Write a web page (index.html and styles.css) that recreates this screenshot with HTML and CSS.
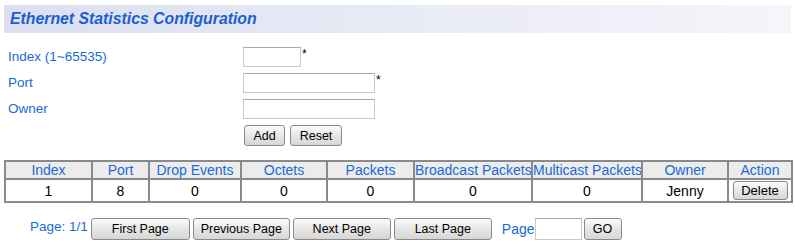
FILE: index.html
```html
<!DOCTYPE html>
<html lang="en">
<head>
    <meta charset="UTF-8">
    <title>Ethernet Statistics Configuration</title>
    <link rel="stylesheet" href="styles.css">
</head>
<body>
    <div class="title-bar">Ethernet Statistics Configuration</div>

    <form class="config-form">
        <div class="form-row">
            <label class="form-label">Index (1~65535)</label>
            <input type="text" class="input-short"><span class="req">*</span>
        </div>
        <div class="form-row">
            <label class="form-label">Port</label>
            <input type="text" class="input-long"><span class="req">*</span>
        </div>
        <div class="form-row">
            <label class="form-label">Owner</label>
            <input type="text" class="input-long">
        </div>
        <div class="form-row">
            <span class="form-label"></span>
            <button type="button" class="btn btn-add">Add</button>
            <button type="button" class="btn btn-reset">Reset</button>
        </div>
    </form>

    <table class="stats-table">
        <tr>
            <th class="c-index">Index</th>
            <th class="c-port">Port</th>
            <th class="c-drop">Drop Events</th>
            <th class="c-oct">Octets</th>
            <th class="c-pkt">Packets</th>
            <th class="c-bc">Broadcast Packets</th>
            <th class="c-mc">Multicast Packets</th>
            <th class="c-owner">Owner</th>
            <th class="c-action">Action</th>
        </tr>
        <tr>
            <td>1</td>
            <td>8</td>
            <td>0</td>
            <td>0</td>
            <td>0</td>
            <td>0</td>
            <td>0</td>
            <td>Jenny</td>
            <td><button type="button" class="btn btn-delete">Delete</button></td>
        </tr>
    </table>

    <div class="pager">
        <span class="pager-text">Page: 1/1</span>
        <button type="button" class="btn btn-page btn-first">First Page</button>
        <button type="button" class="btn btn-page btn-prev">Previous Page</button>
        <button type="button" class="btn btn-page">Next Page</button>
        <button type="button" class="btn btn-page">Last Page</button>
        <span class="pager-text pager-goto">Page</span><input type="text" class="input-page"><button type="button" class="btn btn-go">GO</button>
    </div>
</body>
</html>
```

FILE: styles.css
```css
body {
    margin: 0;
    padding: 5px 4px 0 4px;
    font-family: "Liberation Sans", Arial, sans-serif;
    font-size: 13px;
    color: #000;
    background: #fff;
}
.title-bar {
    height: 28px;
    line-height: 28px;
    padding-left: 6px;
    font-size: 15.8px;
    font-weight: bold;
    font-style: italic;
    color: #1a5fd2;
    background: linear-gradient(to right, #dcdff0, #e8eaf5 50%, #f5f5fa);
    width: 781px;
}
.config-form {
    margin: 14px 0 0 0;
}
.form-row {
    display: flex;
    align-items: flex-start;
    height: 26px;
}
.form-label {
    width: 235px;
    padding-left: 4px;
    color: #1a6ad8;
    font-size: 13.5px;
    line-height: 20px;
    flex-shrink: 0;
}
input[type="text"] {
    height: 20px;
    box-sizing: border-box;
    border: 1px solid #c8c8c8;
    border-top-color: #a8a8a8;
    margin: 0;
    padding: 0 2px;
    font-family: inherit;
    font-size: 13px;
}
.input-short {
    width: 58px;
}
.input-long {
    width: 132px;
}
.req {
    font-size: 12px;
    line-height: 14px;
    margin-left: 1px;
}
.btn {
    font-family: "Liberation Sans", Arial, sans-serif;
    font-size: 12.5px;
    color: #000;
    background: linear-gradient(to bottom, #fcfcfc, #e6e6e6 50%, #d6d6d6);
    border: 1px solid #8a8a8a;
    border-radius: 3px;
    height: 21px;
    padding: 0;
    margin: 0;
    box-sizing: border-box;
    cursor: pointer;
}
.btn-add {
    width: 41px;
    margin-left: 1px;
}
.btn-reset {
    width: 52px;
    margin-left: 5px;
}
.stats-table {
    margin-top: 9px;
    width: 787px;
    border-collapse: collapse;
    border: 2px solid #8a8a8a;
    table-layout: fixed;
}
.stats-table th,
.stats-table td {
    border: 2px solid #8a8a8a;
    text-align: center;
    padding: 0;
    white-space: nowrap;
    overflow: hidden;
    font-size: 14px;
}
.stats-table th {
    background: #ececec;
    color: #1a6ad8;
    font-weight: normal;
    height: 16px;
}
.stats-table td {
    height: 21px;
}
.c-index { width: 85px; }
.c-port { width: 55px; }
.c-drop { width: 90px; }
.c-oct { width: 84px; }
.c-pkt { width: 85px; }
.c-bc { width: 116px; }
.c-mc { width: 108px; }
.c-owner { width: 84px; }
.c-action { width: 62px; }
.btn-delete {
    width: 55px;
    height: 19px;
    display: block;
    margin: 0 auto;
    font-size: 13px;
}
.pager {
    display: flex;
    align-items: center;
    margin-top: 15px;
    padding-left: 26px;
    height: 22px;
}
.pager-text {
    color: #1a6ad8;
    font-size: 13.5px;
    margin-top: -5px;
}
.btn-page {
    width: 98px;
    height: 22px;
    margin-left: 3px;
}
.btn-first {
    width: 99px;
    margin-left: 3px;
}
.btn-prev {
    width: 97px;
}
.pager-goto {
    margin-left: 10px;
    font-size: 14px;
    margin-top: 0;
}
.input-page {
    width: 47px;
    height: 22px !important;
}
.btn-go {
    width: 38px;
    height: 22px;
    margin-left: 2px;
}
```
